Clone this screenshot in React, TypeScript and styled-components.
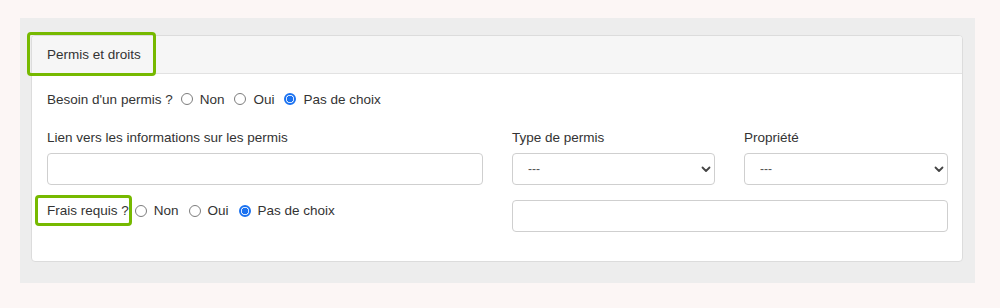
import React from "react";
import styled, { createGlobalStyle } from "styled-components";

const Global = createGlobalStyle`
  html, body { margin: 0; padding: 0; background: #fcf6f5; }
  body { font-family: "Liberation Sans", Arial, Helvetica, sans-serif; color: #333; font-size: 13.5px; }
  * { box-sizing: border-box; }
`;

const Page = styled.div`
  width: 1000px;
  height: 308px;
  padding: 18px 25px 0 20px;
`;

const Well = styled.div`
  width: 955px;
  height: 265px;
  background: #ededed;
  padding: 17px 12px 21px 11px;
`;

const Card = styled.div`
  height: 227px;
  background: #fff;
  border: 1px solid #dcdcdc;
  border-radius: 4px;
  display: flex;
  flex-direction: column;
`;

const CardHeader = styled.div`
  height: 38px;
  background: #f6f6f6;
  border-bottom: 1px solid #e2e2e2;
  border-radius: 3px 3px 0 0;
  display: flex;
`;

const Highlight = styled.div`
  border: 3px solid #76b900;
  border-radius: 4px;
  display: flex;
  align-items: center;
`;

const HeaderTitle = styled(Highlight)`
  margin: -4px 0 -3px -5px;
  width: 129px;
  padding: 0 0 0 17px;
  color: #333;
`;

const Body = styled.div`
  padding: 15px 15px 0 15px;
  display: flex;
  flex-direction: column;
`;

const RadioLine = styled.div`
  display: flex;
  align-items: center;
  height: 20px;
`;

const Question = styled.span`
  margin-right: 8px;
`;

const Radio = styled.span<{ $checked?: boolean }>`
  width: 12px;
  height: 12px;
  border-radius: 50%;
  flex: none;
  border: ${(p) => (p.$checked ? "2px solid #1b72f0" : "1px solid #7d7d7d")};
  background: ${(p) =>
    p.$checked
      ? "radial-gradient(circle, #1b72f0 0 3px, #fff 3.6px)"
      : "#fff"};
  margin-right: 7px;
`;

const Choice = styled.label`
  display: flex;
  align-items: center;
  margin-right: 10px;
  color: #333;
`;

const Grid = styled.div`
  display: grid;
  grid-template-columns: 436px 203px 204px;
  column-gap: 29px;
  margin-top: 20px;
`;

const Field = styled.div`
  display: flex;
  flex-direction: column;
`;

const Label = styled.label`
  height: 18px;
  line-height: 18px;
  margin-bottom: 6px;
`;

const Input = styled.input`
  height: 32px;
  width: 100%;
  border: 1px solid #cfcfcf;
  border-radius: 4px;
  background: #fff;
  font: inherit;
  padding: 0 12px;
  outline: none;
`;

const SelectWrap = styled.div`
  position: relative;
  height: 32px;
`;

const Select = styled.select`
  appearance: none;
  -webkit-appearance: none;
  width: 100%;
  height: 32px;
  border: 1px solid #cfcfcf;
  border-radius: 4px;
  background: #fff;
  font: inherit;
  font-size: 12px;
  color: #555;
  padding: 0 15px;
  outline: none;
`;

const Chevron = styled.svg`
  position: absolute;
  right: 4px;
  top: 13px;
  pointer-events: none;
`;

const BottomRow = styled.div`
  display: grid;
  grid-template-columns: 436px 436px;
  column-gap: 29px;
  margin-top: 10px;
`;

const FeeBox = styled(Highlight)`
  height: 31px;
  padding: 0 0 0 9px;
  margin-left: -12px;
`;

const FeeLine = styled.div`
  display: flex;
  align-items: flex-start;
`;

const FeeRadios = styled(RadioLine)`
  margin-left: 3px;
  height: 31px;
`;

const RightInput = styled(Input)`
  margin-top: 5px;
`;

const choices = ["Non", "Oui", "Pas de choix"];

function Radios() {
  return (
    <>
      {choices.map((c, i) => (
        <Choice key={c}>
          <Radio $checked={i === 2} />
          {c}
        </Choice>
      ))}
    </>
  );
}

function DropDown() {
  return (
    <SelectWrap>
      <Select defaultValue="">
        <option value="">---</option>
      </Select>
      <Chevron width="10" height="7" viewBox="0 0 10 7">
        <path d="M1.5 1.5 L5 5 L8.5 1.5" fill="none" stroke="#444" strokeWidth="1.8" strokeLinecap="round" strokeLinejoin="round" />
      </Chevron>
    </SelectWrap>
  );
}

export default function App() {
  return (
    <>
      <Global />
      <Page>
        <Well>
          <Card>
            <CardHeader>
              <HeaderTitle>Permis et droits</HeaderTitle>
            </CardHeader>
            <Body>
              <RadioLine>
                <Question>Besoin d'un permis ?</Question>
                <Radios />
              </RadioLine>
              <Grid>
                <Field>
                  <Label>Lien vers les informations sur les permis</Label>
                  <Input />
                </Field>
                <Field>
                  <Label>Type de permis</Label>
                  <DropDown />
                </Field>
                <Field>
                  <Label>Propriété</Label>
                  <DropDown />
                </Field>
              </Grid>
              <BottomRow>
                <FeeLine>
                  <FeeBox>Frais requis ?</FeeBox>
                  <FeeRadios>
                    <Radios />
                  </FeeRadios>
                </FeeLine>
                <RightInput />
              </BottomRow>
            </Body>
          </Card>
        </Well>
      </Page>
    </>
  );
}
